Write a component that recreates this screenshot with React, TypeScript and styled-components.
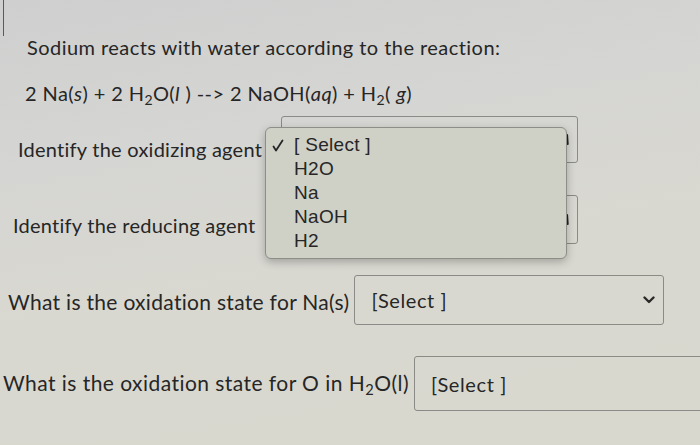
import React from "react";
import styled, { createGlobalStyle } from "styled-components";

const GlobalStyle = createGlobalStyle`
  html, body {
    margin: 0;
    padding: 0;
  }
  body {
    width: 700px;
    height: 445px;
    overflow: hidden;
    font-family: Lato, "Open Sans", sans-serif;
    color: #262626;
  }
`;

const Page = styled.div`
  position: relative;
  width: 700px;
  height: 445px;
  overflow: hidden;
  background: linear-gradient(170deg, #cfcfcf 0%, #d5d5d3 30%, #d9d8d0 60%, #d8d8cf 100%);
  display: flex;
  flex-direction: column;
`;

const EdgeLine = styled.div`
  position: absolute;
  left: 3px;
  top: 0;
  width: 1px;
  height: 36px;
  background: #5a5a5a;
`;

const Title = styled.p`
  margin: 35px 0 0 27px;
  font-size: 20px;
  line-height: 24px;
  letter-spacing: 0.45px;
  white-space: nowrap;
`;

const Equation = styled.p`
  margin: 23px 0 0 25px;
  font-size: 20px;
  line-height: 22px;
  letter-spacing: 0.4px;
  white-space: nowrap;
`;

const Row = styled.div<{ $indent: number; $top: number }>`
  position: relative;
  display: flex;
  align-items: flex-start;
  margin: ${(p) => p.$top}px 0 0 ${(p) => p.$indent}px;
`;

const Label = styled.span<{ $shift: number; $size: number; $spacing: number; $width?: number }>`
  font-size: ${(p) => p.$size}px;
  line-height: 24px;
  letter-spacing: ${(p) => p.$spacing}px;
  white-space: nowrap;
  margin-top: ${(p) => p.$shift}px;
  ${(p) => (p.$width ? `width: ${p.$width}px;` : "")}
`;

const SelectBox = styled.div<{ $width: number; $height: number }>`
  box-sizing: border-box;
  flex-shrink: 0;
  width: ${(p) => p.$width}px;
  height: ${(p) => p.$height}px;
  margin-left: 5px;
  border: 1px solid #8a8a86;
  border-radius: 3px;
  display: flex;
  align-items: center;
  justify-content: space-between;
  padding: 0 8px 0 16px;
  font-size: 20px;
  letter-spacing: 0.6px;
  color: #262626;
`;

const Sub = styled.sub`
  font-size: 0.7em;
  vertical-align: -0.25em;
  line-height: 0;
`;

const Popup = styled.div`
  position: absolute;
  left: 265px;
  top: 127px;
  width: 302px;
  height: 132px;
  box-sizing: border-box;
  background: #cfd0c6;
  border: 1px solid #8d8e88;
  border-radius: 6px;
  box-shadow: 0 3px 8px rgba(0, 0, 0, 0.25);
  padding: 5px 0 0 0;
  font-family: "Liberation Sans", Arial, sans-serif;
  font-size: 19px;
  letter-spacing: 0.3px;
  color: #262626;
  display: flex;
  flex-direction: column;
`;

const Option = styled.div`
  display: flex;
  align-items: center;
  height: 24px;
`;

const CheckSlot = styled.span`
  width: 28px;
  padding-left: 6px;
  box-sizing: border-box;
  display: flex;
  align-items: center;
`;

const Chevron = () => (
  <svg width="12" height="8" viewBox="0 0 12 8">
    <path d="M1.5 1.5 L6 6 L10.5 1.5" fill="none" stroke="#2a2a2a" strokeWidth="2.4" strokeLinecap="round" strokeLinejoin="round" />
  </svg>
);

const Tick = () => (
  <svg width="6" height="14" viewBox="0 0 6 14">
    <path d="M4 2 L4.6 11" fill="none" stroke="#222" strokeWidth="2.2" strokeLinecap="round" />
  </svg>
);

const CheckMark = () => (
  <svg width="12" height="13" viewBox="0 0 12 13">
    <path d="M1.5 7.5 L4 11.5 L10.5 1.5" fill="none" stroke="#262626" strokeWidth="1.8" strokeLinecap="round" strokeLinejoin="round" />
  </svg>
);

const options = ["H2O", "Na", "NaOH", "H2"];

export default function App() {
  return (
    <>
      <GlobalStyle />
      <Page>
        <EdgeLine />
        <Title>Sodium reacts with water according to the reaction:</Title>
        <Equation>
          2 Na(<i>s</i>) + 2 H<Sub>2</Sub>O(<i>l</i> ) --&gt; 2 NaOH(<i>aq</i>) + H<Sub>2</Sub>( <i>g</i>)
        </Equation>

        <Row $indent={18} $top={12}>
          <Label $shift={21} $size={20} $spacing={0.25} $width={258}>
            Identify the oxidizing agent
          </Label>
          <SelectBox $width={297} $height={47}>
            <span />
            <Tick />
          </SelectBox>
        </Row>

        <Row $indent={13} $top={32}>
          <Label $shift={18} $size={20} $spacing={0.25} $width={263}>
            Identify the reducing agent
          </Label>
          <SelectBox $width={297} $height={49}>
            <span />
            <Tick />
          </SelectBox>
        </Row>

        <Row $indent={8} $top={31}>
          <Label $shift={15} $size={21} $spacing={0.3}>
            What is the oxidation state for Na(s)
          </Label>
          <SelectBox $width={310} $height={50}>
            <span>[Select ]</span>
            <Chevron />
          </SelectBox>
        </Row>

        <Row $indent={3} $top={31}>
          <Label $shift={15} $size={21} $spacing={0.45}>
            What is the oxidation state for O in H<Sub>2</Sub>O(l)
          </Label>
          <SelectBox $width={300} $height={55}>
            <span>[Select ]</span>
          </SelectBox>
        </Row>

        <Popup>
          <Option>
            <CheckSlot>
              <CheckMark />
            </CheckSlot>
            [ Select ]
          </Option>
          {options.map((o) => (
            <Option key={o}>
              <CheckSlot />
              {o}
            </Option>
          ))}
        </Popup>
      </Page>
    </>
  );
}
